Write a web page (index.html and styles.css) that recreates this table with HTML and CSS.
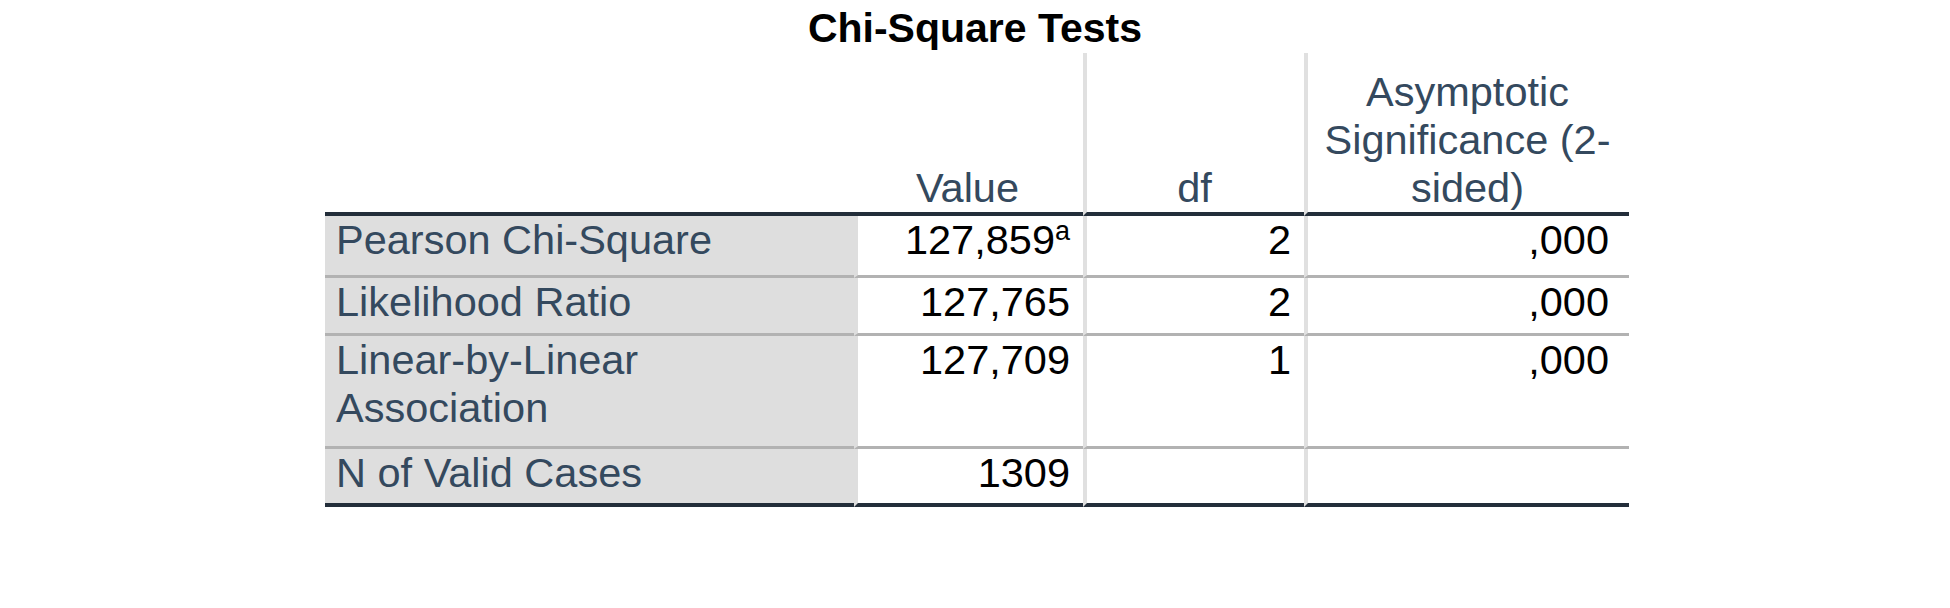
FILE: index.html
```html
<!DOCTYPE html>
<html lang="en">
<head>
<meta charset="utf-8">
<title>Chi-Square Tests</title>
<link rel="stylesheet" href="styles.css">
</head>
<body>
<div class="page">
  <div class="caption">Chi-Square Tests</div>
  <table class="stats">
    <colgroup>
      <col class="c-label">
      <col class="c-value">
      <col class="c-df">
      <col class="c-sig">
    </colgroup>
    <thead>
      <tr class="r-head">
        <th class="corner"></th>
        <th class="colhead">Value</th>
        <th class="colhead sep">df</th>
        <th class="colhead sep">Asymptotic Significance (2-sided)</th>
      </tr>
    </thead>
    <tbody>
      <tr class="r1">
        <th class="rowhead">Pearson Chi-Square</th>
        <td class="num first">127,859<sup class="fn">a</sup></td>
        <td class="num sep">2</td>
        <td class="num sep last">,000</td>
      </tr>
      <tr class="r2">
        <th class="rowhead">Likelihood Ratio</th>
        <td class="num first">127,765</td>
        <td class="num sep">2</td>
        <td class="num sep last">,000</td>
      </tr>
      <tr class="r3">
        <th class="rowhead">Linear-by-Linear Association</th>
        <td class="num first">127,709</td>
        <td class="num sep">1</td>
        <td class="num sep last">,000</td>
      </tr>
      <tr class="r4 end">
        <th class="rowhead">N of Valid Cases</th>
        <td class="num first">1309</td>
        <td class="num sep"></td>
        <td class="num sep last"></td>
      </tr>
    </tbody>
  </table>
</div>
</body>
</html>
```

FILE: styles.css
```css
html, body {
  margin: 0;
  padding: 0;
  background: #ffffff;
}

.page {
  width: 1950px;
  height: 608px;
  font-family: "Liberation Sans", Arial, sans-serif;
}

.caption {
  height: 53px;
  box-sizing: border-box;
  padding-top: 4px;
  text-align: center;
  font-size: 41px;
  line-height: 48px;
  font-weight: bold;
  color: #000000;
}

.stats {
  margin-left: 325px;
  width: 1304px;
  table-layout: fixed;
  border-collapse: separate;
  border-spacing: 0;
  font-size: 41.5px;
  line-height: 48px;
}

.c-label { width: 529px; }
.c-value { width: 229px; }
.c-df { width: 221px; }
.c-sig { width: 325px; }

.stats th,
.stats td {
  padding: 0 13px 0 11px;
  font-weight: normal;
}

.r-head { height: 163px; }
.r1 { height: 62px; }
.r2 { height: 58px; }
.r3 { height: 113px; }
.r4 { height: 58px; }

.r-head th {
  vertical-align: bottom;
  border-bottom: 4px solid #232e3a;
}

.colhead {
  color: #34495e;
  text-align: center;
  padding: 0 10px;
}

.sep {
  border-left: 4px solid #e0e0e0;
}

.stats tbody th,
.stats tbody td {
  vertical-align: top;
  border-bottom: 3px solid #b2b2b2;
}

.stats tbody .end th,
.stats tbody .end td {
  border-bottom: 4px solid #232e3a;
}

.num.first {
  border-left: 4px solid #dedede;
}

.rowhead {
  background: #dedede;
  color: #34495e;
  text-align: left;
}

.num {
  color: #000000;
  text-align: right;
}

.num.last {
  padding-right: 20px;
}

.fn {
  font-size: 27px;
  line-height: 0;
  vertical-align: 14px;
}
```
